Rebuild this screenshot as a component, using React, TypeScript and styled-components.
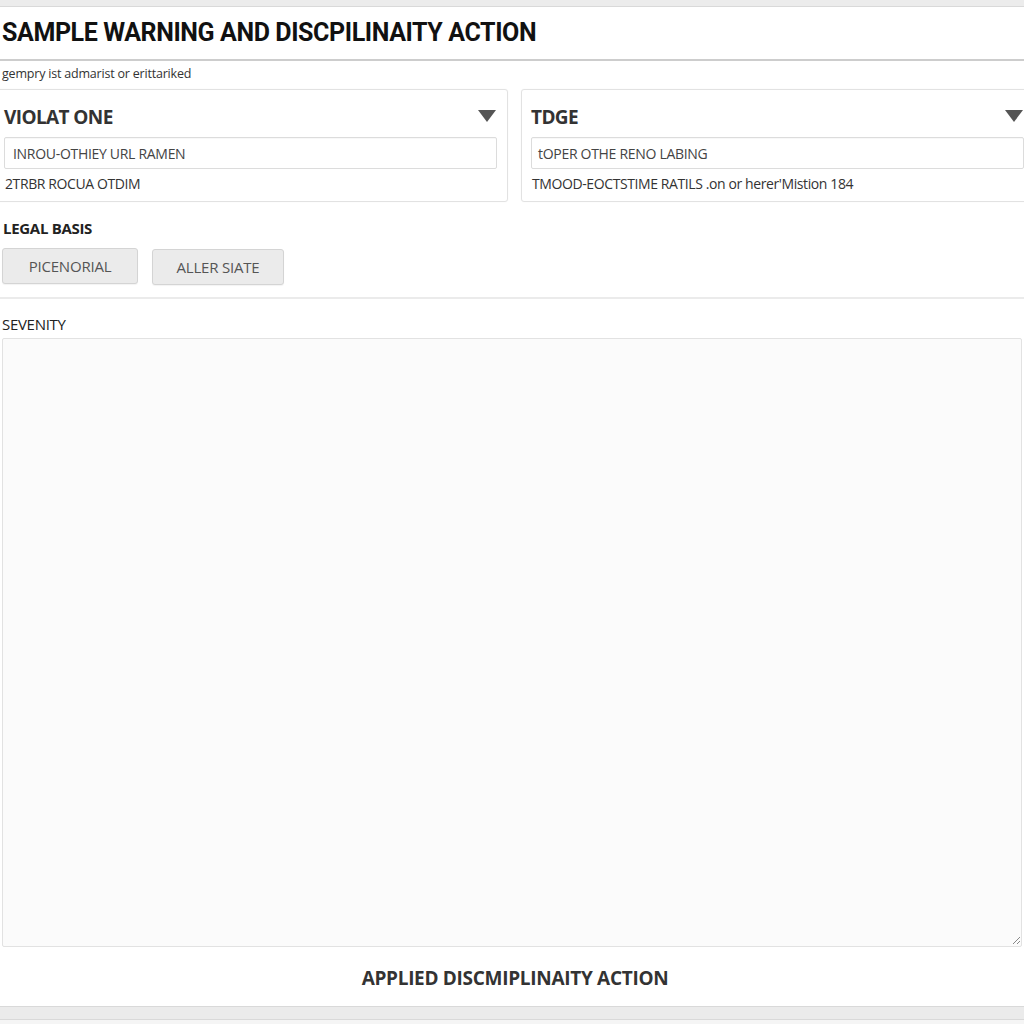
import React from 'react'
import styled, { createGlobalStyle } from 'styled-components'

const GlobalStyle = createGlobalStyle`
  html, body { margin: 0; padding: 0; background: #fff; }
  * { box-sizing: border-box; }
`

const Page = styled.div`
  width: 1024px;
  height: 1024px;
  overflow: hidden;
  display: flex;
  flex-direction: column;
  background: #fff;
  font-family: "Open Sans", "Liberation Sans", sans-serif;
  color: #333;
`

const TopStrip = styled.div`
  height: 7px;
  flex: none;
  background: #ececec;
  border-bottom: 1px solid #d9d9d9;
`

const Title = styled.h1`
  margin: 0;
  height: 52px;
  padding: 11px 0 0 2px;
  font-family: Roboto, "Liberation Sans", sans-serif;
  font-size: 25px;
  font-weight: 700;
  letter-spacing: -0.4px;
  color: #111;
  line-height: 30px;
`

const Rule = styled.div<{ $h?: number; $c?: string }>`
  height: ${p => p.$h ?? 2}px;
  flex: none;
  background: ${p => p.$c ?? '#cfcfcf'};
`

const Subtitle = styled.div`
  padding: 4px 0 0 2px;
  height: 28px;
  font-size: 12.5px;
  line-height: 18px;
  letter-spacing: -0.2px;
  color: #333;
`

const CardRow = styled.div`
  display: grid;
  grid-template-columns: 514px 514px;
  gap: 13px;
  margin-left: -6px;
  flex: none;
`

const Card = styled.div`
  height: 113px;
  border: 1px solid #e2e2e2;
  border-radius: 3px;
  padding: 7px 10px 0 9px;
  background: #fff;
  box-shadow: 0 0 2px rgba(0, 0, 0, 0.04);
`

const CardHead = styled.div`
  display: flex;
  align-items: center;
  justify-content: space-between;
  height: 40px;
`

const CardTitle = styled.span`
  font-family: "Open Sans", "Liberation Sans", sans-serif;
  font-size: 19px;
  font-weight: 700;
  letter-spacing: -0.6px;
  color: #333;
`

const Caret = styled.span`
  width: 0;
  height: 0;
  margin: 0 1px 3px 0;
  border-left: 9px solid transparent;
  border-right: 9px solid transparent;
  border-top: 12px solid #555;
`

const Field = styled.div<{ $pad?: number }>`
  height: 32px;
  border: 1px solid #dcdcdc;
  border-radius: 2px;
  padding-left: ${p => p.$pad ?? 8}px;
  display: flex;
  align-items: center;
  font-size: 14px;
  color: #444;
  letter-spacing: -0.3px;
  box-shadow: inset 0 1px 1px rgba(0, 0, 0, 0.03);
`

const Note = styled.div`
  height: 28px;
  display: flex;
  align-items: center;
  padding-left: 1px;
  font-size: 14px;
  color: #333;
  letter-spacing: -0.4px;
`

const Section = styled.div`
  padding: 16px 0 0 3px;
  height: 95px;
  flex: none;
`

const Label = styled.div<{ $bold?: boolean }>`
  font-size: 15px;
  line-height: 20px;
  font-weight: ${p => (p.$bold ? 700 : 400)};
  letter-spacing: -0.3px;
  color: #222;
`

const ButtonRow = styled.div`
  display: flex;
  align-items: flex-start;
  gap: 14px;
  margin: 10px 0 0 -1px;
`

const Chip = styled.button<{ $w: number; $dy?: number }>`
  width: ${p => p.$w}px;
  height: 36px;
  margin-top: ${p => p.$dy ?? 0}px;
  border: 1px solid #d4d4d4;
  border-radius: 3px;
  background: #ebebeb;
  font-family: "Open Sans", "Liberation Sans", sans-serif;
  font-size: 15px;
  color: #555;
  letter-spacing: -0.2px;
  box-shadow: 0 1px 1px rgba(0, 0, 0, 0.05);
`

const SeverityBlock = styled.div`
  padding: 15px 2px 0 2px;
  display: flex;
  flex-direction: column;
  gap: 4px;
  flex: none;
`

const TextBox = styled.div`
  position: relative;
  height: 609px;
  border: 1px solid #e2e2e2;
  border-radius: 2px;
  background: #fbfbfb;
`

const Grip = styled.svg`
  position: absolute;
  right: 0;
  bottom: 1px;
`

const Submit = styled.div`
  height: 59px;
  display: flex;
  align-items: center;
  justify-content: center;
  padding: 2px 0 0 6px;
  font-size: 19px;
  font-weight: 700;
  letter-spacing: -0.3px;
  color: #333;
`

const Footer = styled.div`
  height: 14px;
  flex: none;
  background: #ebebeb;
  border-top: 1px solid #d9d9d9;
  border-bottom: 1px solid #d9d9d9;
`

const Base = styled.div`
  flex: 1;
  background: #f5f5f5;
`

export default function App() {
  return (
    <>
      <GlobalStyle />
      <Page>
        <TopStrip />
        <Title>SAMPLE WARNING AND DISCPILINAITY ACTION</Title>
        <Rule $h={2} $c="#cdcdcd" />
        <Subtitle>gempry ist admarist or erittariked</Subtitle>
        <CardRow>
          <Card>
            <CardHead>
              <CardTitle>VIOLAT ONE</CardTitle>
              <Caret />
            </CardHead>
            <Field>INROU-OTHIEY URL RAMEN</Field>
            <Note>2TRBR ROCUA OTDIM</Note>
          </Card>
          <Card>
            <CardHead>
              <CardTitle>TDGE</CardTitle>
              <Caret />
            </CardHead>
            <Field $pad={6}>tOPER OTHE RENO LABING</Field>
            <Note>TMOOD-EOCTSTIME RATILS .on or herer'Mistion 184</Note>
          </Card>
        </CardRow>
        <Section>
          <Label $bold>LEGAL BASIS</Label>
          <ButtonRow>
            <Chip $w={136}>PICENORIAL</Chip>
            <Chip $w={132} $dy={1}>ALLER SIATE</Chip>
          </ButtonRow>
        </Section>
        <Rule $h={2} $c="#ebebeb" />
        <SeverityBlock>
          <Label>SEVENITY</Label>
          <TextBox>
            <Grip width="10" height="10" viewBox="0 0 10 10">
              <path d="M9 2 L2 9 M9 6 L6 9" stroke="#888" strokeWidth="1" fill="none" />
            </Grip>
          </TextBox>
        </SeverityBlock>
        <Submit>APPLIED DISCMIPLINAITY ACTION</Submit>
        <Footer />
        <Base />
      </Page>
    </>
  )
}
